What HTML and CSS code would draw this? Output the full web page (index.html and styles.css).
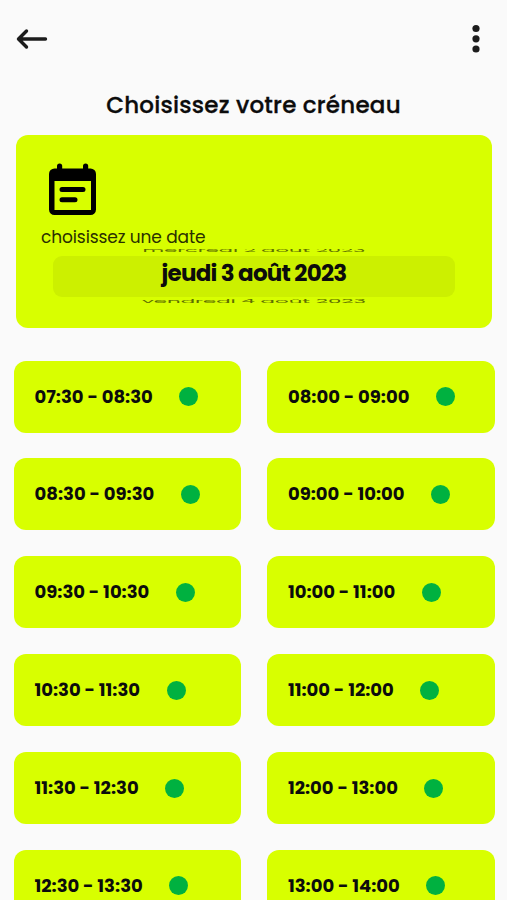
FILE: index.html
```html
<!DOCTYPE html>
<html lang="fr">
<head>
    <meta charset="UTF-8">
    <meta name="viewport" content="width=device-width, initial-scale=1.0">
    <title>Choisissez votre créneau</title>
    <link rel="stylesheet" href="styles.css">
</head>
<body>
    <header class="topbar">
        <svg class="back" width="32" height="22" viewBox="0 0 32 22">
            <path d="M29.5 11H3M10.5 3L2.5 11L10.5 19" />
        </svg>
        <svg class="more" width="8" height="30" viewBox="0 0 8 30">
            <circle cx="4" cy="4.5" r="3.6" />
            <circle cx="4" cy="14.8" r="3.6" />
            <circle cx="4" cy="25" r="3.6" />
        </svg>
    </header>

    <h1 class="title">Choisissez votre créneau</h1>

    <section class="date-card">
        <svg class="calendar" width="48" height="53" viewBox="0 0 48 53">
            <path fill-rule="evenodd" d="M5.5 5.5H8V3A2.6 2.6 0 0 1 13.2 3V5.5H34V3A2.6 2.6 0 0 1 39.2 3V5.5H41.5A5.5 5.5 0 0 1 47 11V46.5A5.5 5.5 0 0 1 41.5 52H5.5A5.5 5.5 0 0 1 0 46.5V11A5.5 5.5 0 0 1 5.5 5.5ZM5.5 18V47H42V18Z" />
            <path class="lines" d="M13 26.5H34M13 36.7H26" />
        </svg>
        <p class="hint">choisissez une date</p>
        <div class="wheel">
            <div class="wheel-side prev"><span>mercredi 2 août 2023</span></div>
            <div class="wheel-current">jeudi 3 août 2023</div>
            <div class="wheel-side next"><span>vendredi 4 août 2023</span></div>
        </div>
    </section>

    <main class="slots">
        <div class="slot"><span class="time">07:30 - 08:30</span><span class="dot"></span></div>
        <div class="slot"><span class="time">08:00 - 09:00</span><span class="dot"></span></div>
        <div class="slot"><span class="time">08:30 - 09:30</span><span class="dot"></span></div>
        <div class="slot"><span class="time">09:00 - 10:00</span><span class="dot"></span></div>
        <div class="slot"><span class="time">09:30 - 10:30</span><span class="dot"></span></div>
        <div class="slot"><span class="time">10:00 - 11:00</span><span class="dot"></span></div>
        <div class="slot"><span class="time">10:30 - 11:30</span><span class="dot"></span></div>
        <div class="slot"><span class="time">11:00 - 12:00</span><span class="dot"></span></div>
        <div class="slot"><span class="time">11:30 - 12:30</span><span class="dot"></span></div>
        <div class="slot"><span class="time">12:00 - 13:00</span><span class="dot"></span></div>
        <div class="slot"><span class="time">12:30 - 13:30</span><span class="dot"></span></div>
        <div class="slot"><span class="time">13:00 - 14:00</span><span class="dot"></span></div>
    </main>
</body>
</html>
```

FILE: styles.css
```css
* {
    box-sizing: border-box;
}

body {
    font-family: Poppins, Inter, sans-serif;
    background-color: #fafafa;
    color: #0c0c0c;
    margin: 0;
    height: 900px;
    overflow: hidden;
}

.topbar {
    display: flex;
    justify-content: space-between;
    align-items: center;
    height: 77px;
    padding: 0 27px 0 16px;
}

.back {
    fill: none;
    stroke: #1c1c1c;
    stroke-width: 3.4;
    stroke-linecap: round;
    stroke-linejoin: round;
}

.more {
    fill: #1c1c1c;
}

.title {
    margin: 0;
    height: 58px;
    line-height: 56px;
    font-size: 23px;
    font-weight: 500;
    letter-spacing: 0.22px;
    text-align: center;
    -webkit-text-stroke: 0.3px #0c0c0c;
}

.date-card {
    height: 193px;
    margin: 0 15px 0 16px;
    padding: 28px 37px 0;
    background-color: #d8ff00;
    border-radius: 12px;
}

.calendar {
    display: block;
    margin-left: -4px;
}

.lines {
    fill: none;
    stroke: #000;
    stroke-width: 5;
    stroke-linecap: round;
}

.hint {
    margin: 8px 0 0 -12px;
    height: 25px;
    line-height: 27px;
    font-size: 17px;
    letter-spacing: -0.1px;
    color: #2a3000;
}

.wheel {
    text-align: center;
}

.wheel-current {
    height: 41px;
    line-height: 35px;
    border-radius: 9px;
    background-color: #ccf000;
    font-size: 23px;
    font-weight: 700;
    letter-spacing: -0.75px;
}

/* neighbouring dates, almost rolled out of view */
.wheel-side {
    height: 7px;
    overflow: hidden;
    font-size: 21px;
    color: #5d6e00;
}

.wheel-side span {
    display: block;
    line-height: 30px;
    transform: scaleY(0.28);
}

.prev span {
    margin-top: -14.5px;
}

.next {
    height: 6px;
}

.next span {
    margin-top: -11px;
    font-size: 21.3px;
}

.slots {
    display: grid;
    grid-template-columns: 1fr 1fr;
    grid-auto-rows: 72px;
    gap: 25.9px;
    margin: 32.5px 12.5px 0 13.5px;
}

.slot {
    display: flex;
    align-items: center;
    gap: 26.5px;
    padding-left: 21px;
    background-color: #d8ff00;
    border-radius: 12px;
}

.time {
    font-size: 18px;
    line-height: 28px;
    font-weight: 700;
    white-space: nowrap;
}

.dot {
    width: 19px;
    height: 19px;
    border-radius: 50%;
    background-color: #00b140;
}
```
